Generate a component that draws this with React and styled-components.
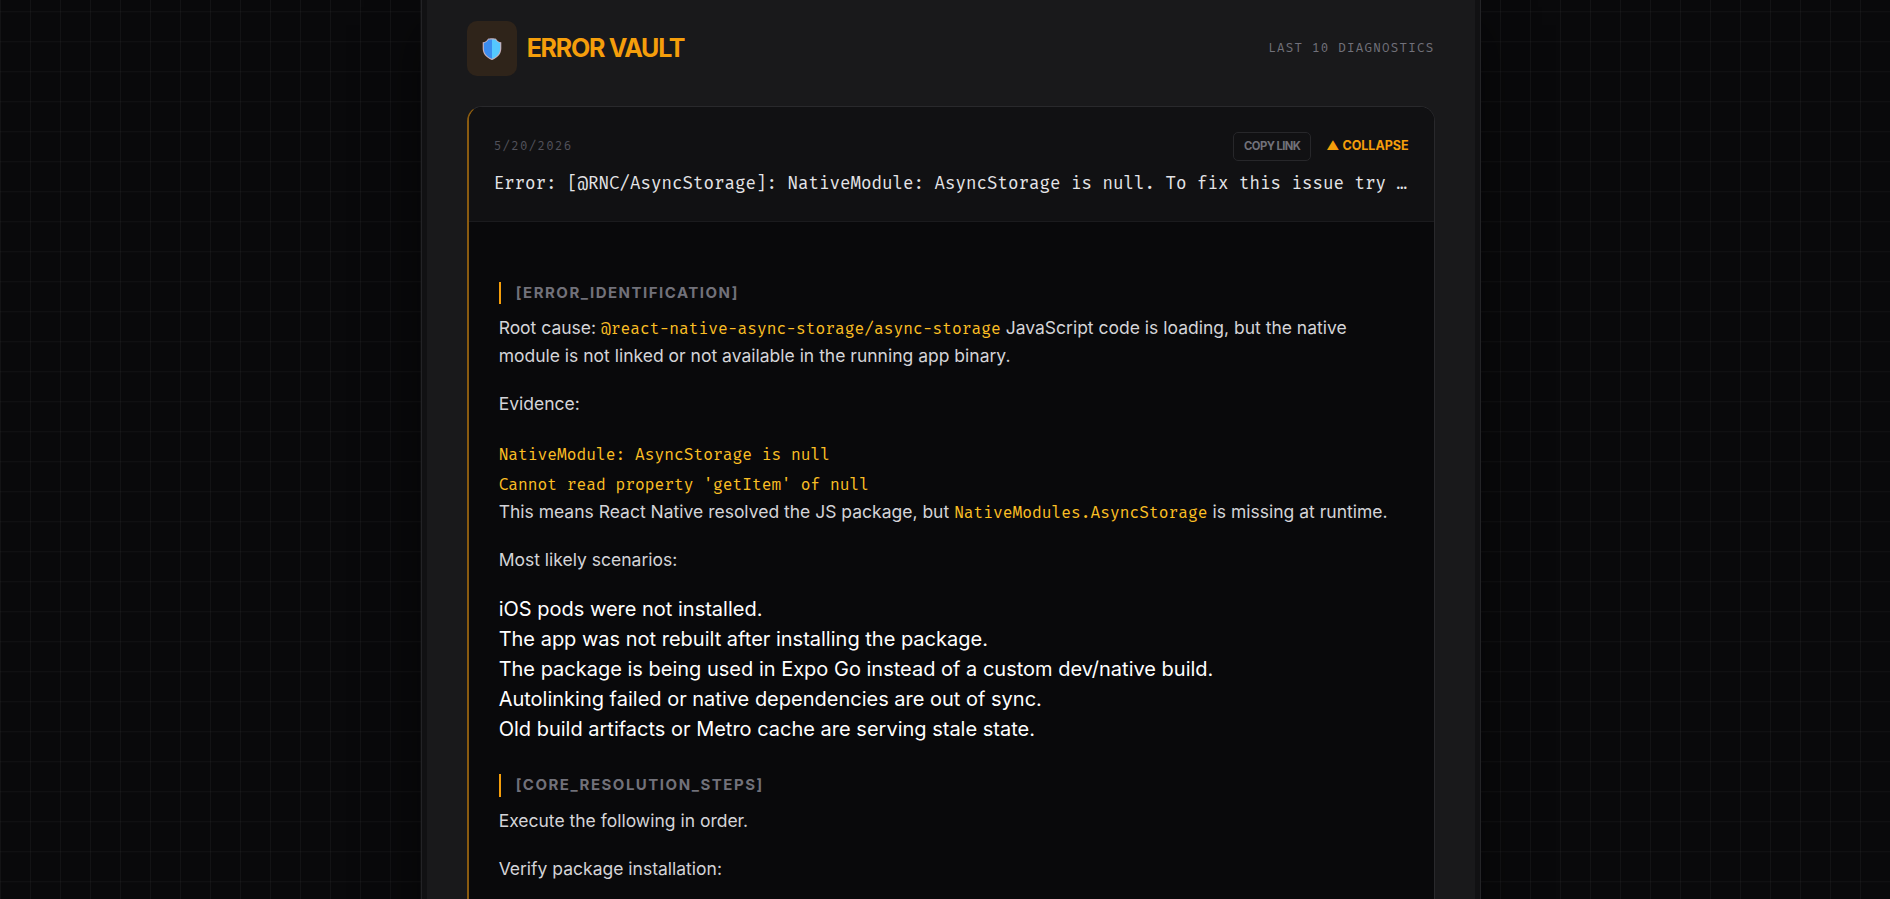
import { useState } from "react";
import styled, { createGlobalStyle } from "styled-components";

export default function App() {
  const [open, setOpen] = useState(true);

  return (
    <Page>
      <GlobalStyle />
      <Shell>
        <Panel>
          <Header>
            <Brand>
              <IconBox>
                <ShieldIcon />
              </IconBox>
              <Title>ERROR VAULT</Title>
            </Brand>
            <Mono $color="#71717a">LAST 10 DIAGNOSTICS</Mono>
          </Header>
          <Card>
            <CardHeader>
              <CardTop>
                <Mono $color="#52525b">5/20/2026</Mono>
                <Actions>
                  <CopyButton type="button">COPY LINK</CopyButton>
                  <ToggleButton
                    type="button"
                    aria-expanded={open}
                    onClick={() => setOpen(!open)}
                  >
                    {open ? "▲ COLLAPSE" : "▼ EXPAND"}
                  </ToggleButton>
                </Actions>
              </CardTop>
              <ErrorLine>
                Error: [@RNC/AsyncStorage]: NativeModule: AsyncStorage is null.
                To fix this issue try …
              </ErrorLine>
            </CardHeader>
            {open && <Report />}
          </Card>
        </Panel>
      </Shell>
    </Page>
  );
}

function Report() {
  return (
    <ReportBody>
      <SectionTitle>[ERROR_IDENTIFICATION]</SectionTitle>
      <Text>
        Root cause: <Code>@react-native-async-storage/async-storage</Code>{" "}
        JavaScript code is loading, but the native module is not linked or not
        available in the running app binary.
      </Text>
      <Text>Evidence:</Text>
      <List>
        <li>
          <Code>NativeModule: AsyncStorage is null</Code>
        </li>
        <li>
          <Code>Cannot read property 'getItem' of null</Code>
        </li>
      </List>
      <Text>
        This means React Native resolved the JS package, but{" "}
        <Code>NativeModules.AsyncStorage</Code> is missing at runtime.
      </Text>
      <Text>Most likely scenarios:</Text>
      <List>
        <li>iOS pods were not installed.</li>
        <li>The app was not rebuilt after installing the package.</li>
        <li>
          The package is being used in Expo Go instead of a custom dev/native
          build.
        </li>
        <li>Autolinking failed or native dependencies are out of sync.</li>
        <li>Old build artifacts or Metro cache are serving stale state.</li>
      </List>
      <SectionTitle>[CORE_RESOLUTION_STEPS]</SectionTitle>
      <Text>Execute the following in order.</Text>
      <Text>Verify package installation:</Text>
    </ReportBody>
  );
}

function ShieldIcon() {
  return (
    <svg width="16" height="18" viewBox="0 0 20 23" aria-hidden="true">
      <path
        d="M10 .3c1.800 0 3.300.2 4.300.6.900 1.700 2.600 3 5.200 3.500v6.300c0 5.200-3.300 9.300-9.500 11.900C3.800 20 .5 15.900.5 10.700V4.400C3.100 3.900 4.800 2.600 5.700.9 6.700.5 8.200.3 10 .3z"
        fill="#c4b0bd"
      />
      <path
        d="M10 1.500H6.500C5.400 3.400 3.900 4.600 1.700 5.200v5.500c0 4.600 2.900 8.200 8.300 10.600z"
        fill="#3b8df0"
      />
      <path
        d="M10 1.500h3.500c1.100 1.900 2.600 3.100 4.800 3.700v5.500c0 4.600-2.900 8.200-8.300 10.600z"
        fill="#55c8ff"
      />
    </svg>
  );
}

const mono = `"Fira Mono", "Fira Code", "DejaVu Sans Mono", monospace`;

const GlobalStyle = createGlobalStyle`
  * {
    box-sizing: border-box;
    margin: 0;
    padding: 0;
  }
  body {
    background: #09090b;
    font-family: Inter, sans-serif;
  }
  #root {
    min-height: 100vh;
    display: flex;
  }
  button {
    font-family: inherit;
    cursor: pointer;
  }
`;

const Page = styled.div`
  zoom: 1.25;
  flex: 1;
  display: flex;
  justify-content: center;
  padding-left: 9px;
  overflow: hidden;
  background-color: #09090b;
  background-image: linear-gradient(
      to right,
      rgba(255, 255, 255, 0.04) 1px,
      transparent 1px
    ),
    linear-gradient(to bottom, rgba(255, 255, 255, 0.04) 1px, transparent 1px);
  background-size: 24px 24px;
  background-position: 0 9px;
`;
const Shell = styled.div`
  display: flex;
  width: 100%;
  max-width: 848px;
  padding: 0 4px;
  background: #111113;
  border: solid #232326;
  border-width: 0 1px;
  box-shadow: 0 20px 40px rgba(0, 0, 0, 0.5);
`;
const Panel = styled.main`
  flex: 1;
  min-width: 0;
  display: flex;
  flex-direction: column;
  padding: 17px 32px 0;
  background: #19191b;
`;
const Header = styled.header`
  display: flex;
  align-items: center;
  justify-content: space-between;
  margin-bottom: 24px;
`;
const Brand = styled.div`
  display: flex;
  align-items: center;
  gap: 8px;
`;
const IconBox = styled.div`
  display: flex;
  align-items: center;
  justify-content: center;
  width: 40px;
  height: 44px;
  border-radius: 8px;
  background: #2f241a;
`;
const Title = styled.h1`
  font-size: 20px;
  line-height: 28px;
  font-weight: 700;
  letter-spacing: -0.05em;
  color: #f59e0b;
`;
const Mono = styled.span`
  font-family: ${mono};
  font-size: 10px;
  line-height: 15px;
  letter-spacing: 0.1em;
  color: ${(props) => props.$color};
`;
const Card = styled.article`
  flex: 1;
  border: 1px solid #29292c;
  border-left: 2px solid #8a5b10;
  border-bottom: none;
  border-radius: 12px 12px 0 0;
  background: #09090b;
  overflow: hidden;
`;
const CardHeader = styled.div`
  padding: 20px;
  background: #111113;
  border-bottom: 1px solid #1b1b1e;
`;
const CardTop = styled.div`
  display: flex;
  align-items: center;
  justify-content: space-between;
  margin-bottom: 8px;
`;
const Actions = styled.div`
  display: flex;
  align-items: center;
  gap: 12px;
`;
const CopyButton = styled.button`
  padding: 4px 8px;
  border: 1px solid #27272a;
  border-radius: 4px;
  background: transparent;
  color: #71717a;
  font-size: 9px;
  line-height: 13px;
  font-weight: 700;
  letter-spacing: -0.05em;
`;
const ToggleButton = styled.button`
  border: none;
  background: transparent;
  color: #f59e0b;
  font-size: 10px;
  line-height: 15px;
  font-weight: 700;
`;
const ErrorLine = styled.h2`
  font-family: ${mono};
  font-size: 14px;
  line-height: 20px;
  font-weight: 400;
  color: #e4e4e7;
  white-space: nowrap;
  overflow: hidden;
  text-overflow: ellipsis;
`;
const ReportBody = styled.div`
  padding: 24px;
`;
const SectionTitle = styled.h3`
  margin: 24px 0 8px;
  padding-left: 12px;
  border-left: 2px solid #f59e0b;
  font-size: 12px;
  line-height: 18px;
  font-weight: 700;
  letter-spacing: 0.1em;
  color: #71717a;
`;
const Text = styled.p`
  margin-bottom: 16px;
  font-size: 14px;
  line-height: 1.6;
  color: #d4d4d8;
`;
const List = styled.ul`
  list-style: none;
  font-size: 16px;
  line-height: 24px;
  color: #fff;
`;
const Code = styled.code`
  font-family: ${mono};
  font-size: 13px;
  line-height: 15px;
  color: #fbbf24;
`;
